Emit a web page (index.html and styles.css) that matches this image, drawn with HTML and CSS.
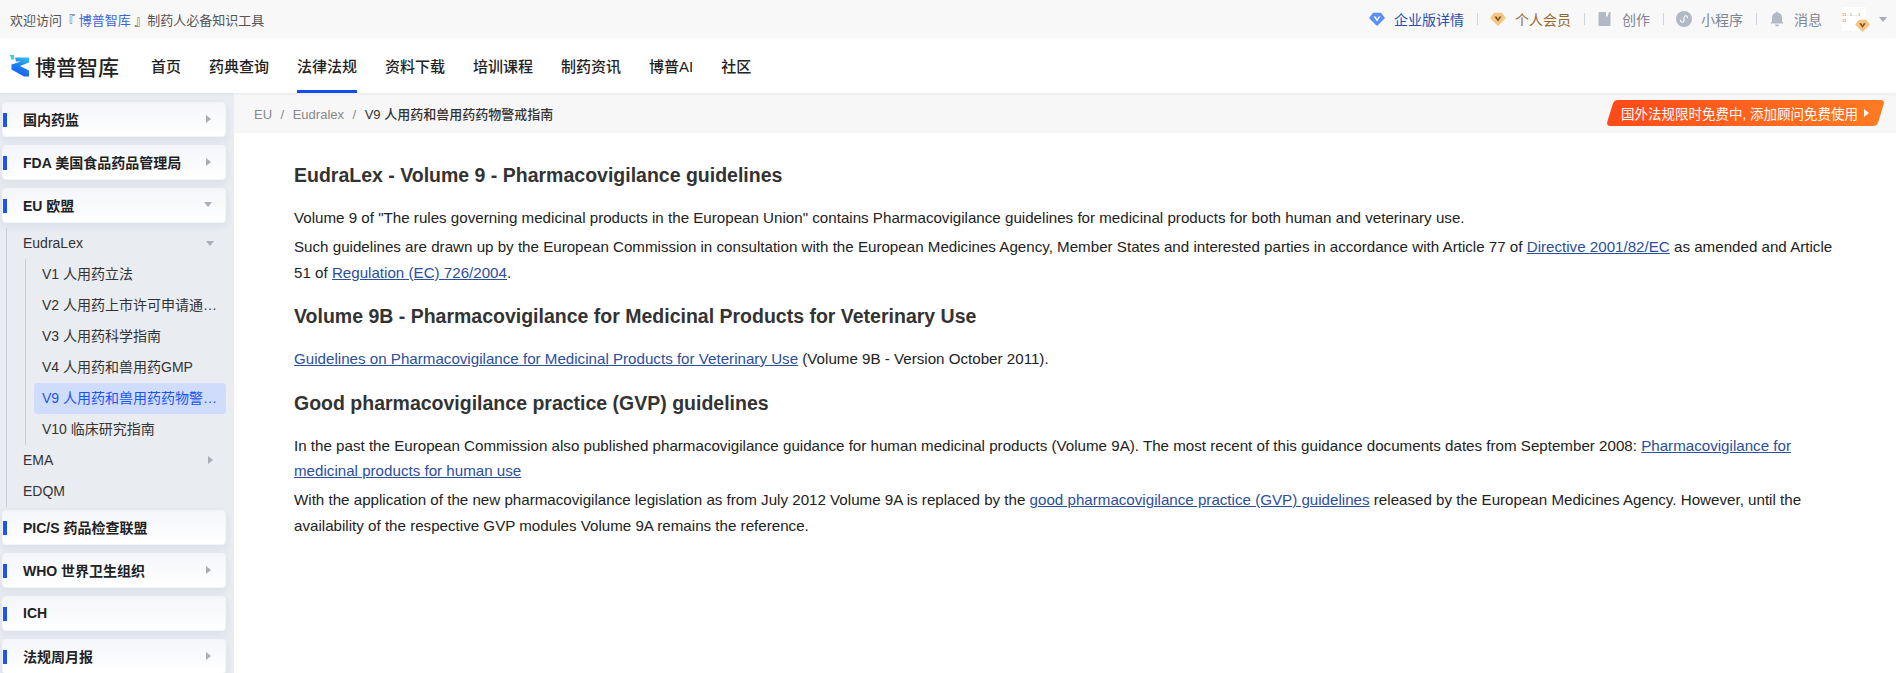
FILE: index.html
```html
<!DOCTYPE html>
<html lang="zh-CN">
<head>
    <meta charset="UTF-8">
    <title>博普智库</title>
    <link rel="stylesheet" href="styles.css">
</head>
<body>
    <!-- Top bar -->
    <div class="topbar">
        <div class="welcome">欢迎访问『 <a href="#">博普智库</a> 』制药人必备知识工具</div>
        <div class="toplinks">
            <a href="#" class="toplink enterprise">
                <svg class="ico" viewBox="0 0 16 16"><path d="M4.500 2.500h7L15 7l-7 7-7-7z" fill="#5b8ff5" stroke="#5b8ff5" stroke-width="1.500" stroke-linejoin="round"/><path d="M4.500 5.500h2.200L8 8.300l1.300-2.800h2.200L8 10.500z" fill="#fff"/></svg>
                企业版详情
            </a>
            <span class="sep"></span>
            <a href="#" class="toplink member">
                <svg class="ico" viewBox="0 0 16 16"><path d="M4.500 2.500h7L15 7l-7 7-7-7z" fill="#f5c684" stroke="#f5c684" stroke-width="1.500" stroke-linejoin="round"/><path d="M4.500 5.500h2.200L8 8.300l1.300-2.800h2.200L8 10.500z" fill="#7a4a12"/></svg>
                个人会员
            </a>
            <span class="sep"></span>
            <a href="#" class="toplink">
                <svg class="ico" viewBox="0 0 16 16"><path d="M2.500 1H9v4.500h1.500L12 1h1.500v13a1 1 0 0 1-1 1h-10a1 1 0 0 1-1-1V2a1 1 0 0 1 1-1z" fill="#b2b8c6"/></svg>
                创作
            </a>
            <span class="sep"></span>
            <a href="#" class="toplink">
                <svg class="ico" viewBox="0 0 16 16"><circle cx="8" cy="8" r="8" fill="#b2b8c6"/><path d="M4.800 8.800a1.700 1.700 0 1 0 3.200.8V6.400a1.700 1.700 0 1 1 3.200.8" fill="none" stroke="#fff" stroke-width="1.100"/></svg>
                小程序
            </a>
            <span class="sep"></span>
            <a href="#" class="toplink">
                <svg class="ico" viewBox="0 0 16 16"><path d="M8 .500a1 1 0 0 1 1 1v.300A5 5 0 0 1 13 6.700V10l1.500 2.500h-13L3 10V6.700a5 5 0 0 1 4-4.900v-.300a1 1 0 0 1 1-1z" fill="#b2b8c6"/><path d="M6 13.500h4a2 2 0 0 1-4 0z" fill="#b2b8c6"/></svg>
                消息
            </a>
            <div class="avatar">
                <span class="avatar-text">11 - 1 - - 1<br>11</span>
                <svg class="avatar-badge" viewBox="0 0 16 16"><path d="M4.500 2.500h7L15 7l-7 7-7-7z" fill="#f5c684" stroke="#f5c684" stroke-width="1.500" stroke-linejoin="round"/><path d="M4.500 5.500h2.200L8 8.300l1.300-2.800h2.200L8 10.500z" fill="#7a4a12"/></svg>
            </div>
            <span class="caret-down top-caret"></span>
        </div>
    </div>

    <!-- Main nav -->
    <div class="header">
        <div class="logo">
            <svg class="logo-mark" viewBox="0 0 19 22">
                <defs>
                    <linearGradient id="logo-grad" x1="0.700" y1="0" x2="0.300" y2="1">
                        <stop offset="0" stop-color="#2fb6ee"/>
                        <stop offset="0.500" stop-color="#1c7cf4"/>
                        <stop offset="1" stop-color="#1a5cf2"/>
                    </linearGradient>
                </defs>
                <path d="M0 0h4v4.500H1.500z" fill="#33d6c6"/>
                <path d="M5 2.500h14v5L10 11l9 4.500v6h-5L1.500 14.500v-5L11 6.500H6z" fill="url(#logo-grad)"/>
            </svg>
            <span class="logo-text">博普智库</span>
        </div>
        <nav class="nav">
            <a href="#">首页</a>
            <a href="#">药典查询</a>
            <a href="#" class="active">法律法规</a>
            <a href="#">资料下载</a>
            <a href="#">培训课程</a>
            <a href="#">制药资讯</a>
            <a href="#">博普AI</a>
            <a href="#">社区</a>
        </nav>
    </div>

    <div class="layout">
        <!-- Sidebar -->
        <aside class="sidebar">
            <div class="card"><span>国内药监</span><i class="caret-right"></i></div>
            <div class="card"><span>FDA 美国食品药品管理局</span><i class="caret-right"></i></div>
            <div class="card"><span>EU 欧盟</span><i class="caret-down"></i></div>
            <div class="tree">
                <div class="tree-item"><span>EudraLex</span><i class="caret-down"></i></div>
                <div class="subtree">
                    <div class="sub-item">V1 人用药立法</div>
                    <div class="sub-item">V2 人用药上市许可申请通知及相关指南</div>
                    <div class="sub-item">V3 人用药科学指南</div>
                    <div class="sub-item">V4 人用药和兽用药GMP</div>
                    <div class="sub-item current">V9 人用药和兽用药药物警戒指南</div>
                    <div class="sub-item">V10 临床研究指南</div>
                </div>
                <div class="tree-item"><span>EMA</span><i class="caret-right"></i></div>
                <div class="tree-item"><span>EDQM</span></div>
            </div>
            <div class="card"><span>PIC/S 药品检查联盟</span></div>
            <div class="card"><span>WHO 世界卫生组织</span><i class="caret-right"></i></div>
            <div class="card"><span>ICH</span></div>
            <div class="card"><span>法规周月报</span><i class="caret-right"></i></div>
        </aside>

        <main class="main">
            <div class="crumbs">
                <div class="crumb-list">
                    <a href="#">EU</a><em>/</em><a href="#">Eudralex</a><em>/</em><b>V9 人用药和兽用药药物警戒指南</b>
                </div>
                <a href="#" class="promo"><span>国外法规限时免费中, 添加顾问免费使用</span><i></i></a>
            </div>
            <article class="content">
                <h2>EudraLex - Volume 9 - Pharmacovigilance guidelines</h2>
                <p>Volume 9 of "The rules governing medicinal products in the European Union" contains Pharmacovigilance guidelines for medicinal products for both human and veterinary use.</p>
                <p>Such guidelines are drawn up by the European Commission in consultation with the European Medicines Agency, Member States and interested parties in accordance with Article 77 of <a href="#">Directive 2001/82/EC</a> as amended and Article 51 of <a href="#">Regulation (EC) 726/2004</a>.</p>
                <h2>Volume 9B - Pharmacovigilance for Medicinal Products for Veterinary Use</h2>
                <p><a href="#">Guidelines on Pharmacovigilance for Medicinal Products for Veterinary Use</a> (Volume 9B - Version October 2011).</p>
                <h2>Good pharmacovigilance practice (GVP) guidelines</h2>
                <p>In the past the European Commission also published pharmacovigilance guidance for human medicinal products (Volume 9A). The most recent of this guidance documents dates from September 2008: <a href="#">Pharmacovigilance for medicinal products for human use</a></p>
                <p>With the application of the new pharmacovigilance legislation as from July 2012 Volume 9A is replaced by the <a href="#">good pharmacovigilance practice (GVP) guidelines</a> released by the European Medicines Agency. However, until the availability of the respective GVP modules Volume 9A remains the reference.</p>
            </article>
        </main>
    </div>
</body>
</html>
```

FILE: styles.css
```css
* {
    margin: 0;
    padding: 0;
    box-sizing: border-box;
}

html, body {
    height: 100%;
    overflow: hidden;
    background: #fff;
    font-family: "Liberation Sans", "Noto Sans CJK SC", sans-serif;
    color: #222;
}

a {
    color: inherit;
    text-decoration: none;
}

/* Top bar */
.topbar {
    height: 38px;
    background: #f8f8f9;
    display: flex;
    justify-content: space-between;
    align-items: center;
    padding: 0 9px 0 10px;
    font-size: 13px;
    color: #555;
}

.welcome a {
    color: #3b66d6;
}

.toplinks {
    display: flex;
    align-items: center;
}

.toplink {
    display: flex;
    align-items: center;
    gap: 9px;
    font-size: 14px;
    color: #7d8494;
}

.toplink.enterprise {
    color: #2a4fb3;
}

.toplink.member {
    color: #96672c;
}

.ico {
    width: 16px;
    height: 16px;
}

.sep {
    width: 1px;
    height: 12px;
    background: #cfd3da;
    margin: 0 12.500px;
}

.avatar {
    position: relative;
    width: 24px;
    height: 24px;
    margin-left: 20px;
    background: #fff;
}

.avatar-text {
    position: absolute;
    left: 0;
    top: 5px;
    width: 24px;
    font-size: 4px;
    line-height: 6px;
    white-space: nowrap;
    overflow: hidden;
    color: #777;
}

.avatar-badge {
    position: absolute;
    right: -4px;
    bottom: -2px;
    width: 15px;
    height: 15px;
}

.top-caret {
    margin-left: 13px;
    border-top-color: #a3a9b6;
}

/* Main nav */
.header {
    height: 55px;
    display: flex;
    align-items: stretch;
    background: #fff;
    box-shadow: 0 1px 3px rgba(0, 0, 0, 0.06);
    position: relative;
}

.logo {
    display: flex;
    align-items: center;
    padding-left: 10px;
    width: 151px;
}

.logo-mark {
    width: 19px;
    height: 22px;
    margin-right: 6px;
}

.logo-text {
    font-size: 21px;
    font-weight: 500;
    color: #222;
    white-space: nowrap;
}

.nav {
    display: flex;
    gap: 28px;
    font-size: 15px;
    font-weight: 500;
}

.nav a {
    display: flex;
    align-items: center;
    color: #222;
    border-bottom: 3px solid transparent;
    border-top: 3px solid transparent;
}

.nav a.active {
    border-bottom-color: #0f4df0;
}

/* Sidebar + content */
.layout {
    display: flex;
    height: 580px;
}

.sidebar {
    width: 234px;
    flex-shrink: 0;
    background: #e9ecf1;
    padding: 9px 8px 0 2px;
    display: flex;
    flex-direction: column;
    gap: 8px;
    overflow: hidden;
}

.card {
    flex: 0 0 35px;
    height: 35px;
    background: linear-gradient(180deg, #f4f6fa, #fff);
    border: 1px solid #f4f5f8;
    border-radius: 4px;
    box-shadow: 0 3px 8px rgba(40, 60, 110, 0.08);
    display: flex;
    align-items: center;
    justify-content: space-between;
    padding: 0 13px 2px 20px;
    font-size: 14px;
    font-weight: bold;
    color: #222;
    position: relative;
}

.card::before {
    content: "";
    position: absolute;
    left: 0;
    top: 10px;
    width: 4px;
    height: 14px;
    background: #1d54f0;
}

.caret-right {
    width: 0;
    height: 0;
    border-left: 5px solid #a9adb5;
    border-top: 4px solid transparent;
    border-bottom: 4px solid transparent;
    margin-right: 1px;
}

.caret-down {
    width: 0;
    height: 0;
    border-top: 5px solid #a9adb5;
    border-left: 4px solid transparent;
    border-right: 4px solid transparent;
}

.tree {
    margin: -3px 0 -5px 4px;
    border-left: 1px solid #ccd0d6;
}

.tree-item {
    height: 31px;
    display: flex;
    align-items: center;
    justify-content: space-between;
    padding: 0 12px 1px 16px;
    font-size: 14px;
    color: #333;
}

.subtree {
    margin-left: 18px;
    border-left: 1px solid #ccd0d6;
    padding-left: 8px;
}

.sub-item {
    height: 31px;
    line-height: 31px;
    font-size: 14px;
    color: #333;
    padding: 0 6px 0 8px;
    white-space: nowrap;
    overflow: hidden;
    text-overflow: ellipsis;
    border-radius: 4px;
}

.sub-item.current {
    background: #cfdcfb;
    color: #1d54f0;
}

.main {
    flex: 1;
    min-width: 0;
}

.crumbs {
    height: 40px;
    background: #f7f7f8;
    display: flex;
    align-items: center;
    justify-content: space-between;
    padding: 0 15px 0 20px;
    font-size: 13px;
    color: #888;
}

.crumb-list em {
    font-style: normal;
    margin: 0 8.500px;
}

.crumb-list b {
    font-weight: 500;
    color: #333;
}

.promo {
    display: flex;
    align-items: center;
    gap: 6px;
    height: 26px;
    padding: 0 12px 0 11px;
    color: #fff;
    font-size: 13.500px;
    white-space: nowrap;
    border-radius: 4px;
    background: linear-gradient(90deg, #ff4a1a, #ff7a22);
    transform: skewX(-17deg);
}

.promo span {
    transform: skewX(17deg);
}

.promo i {
    width: 0;
    height: 0;
    border-left: 5px solid #fff;
    border-top: 4px solid transparent;
    border-bottom: 4px solid transparent;
    transform: skewX(17deg);
}

.content {
    padding: 27px 58px 0 60px;
    font-size: 15.150px;
    line-height: 25.500px;
    color: #222;
}

.content h2 {
    font-size: 19.500px;
    line-height: 30px;
    font-weight: bold;
    color: #333;
    margin: 16px 0 15px;
}

.content h2:first-child {
    margin-top: 0;
}

.content p + p {
    margin-top: 3.500px;
}

.content a {
    color: #2c4e9e;
    text-decoration: underline;
}
```
